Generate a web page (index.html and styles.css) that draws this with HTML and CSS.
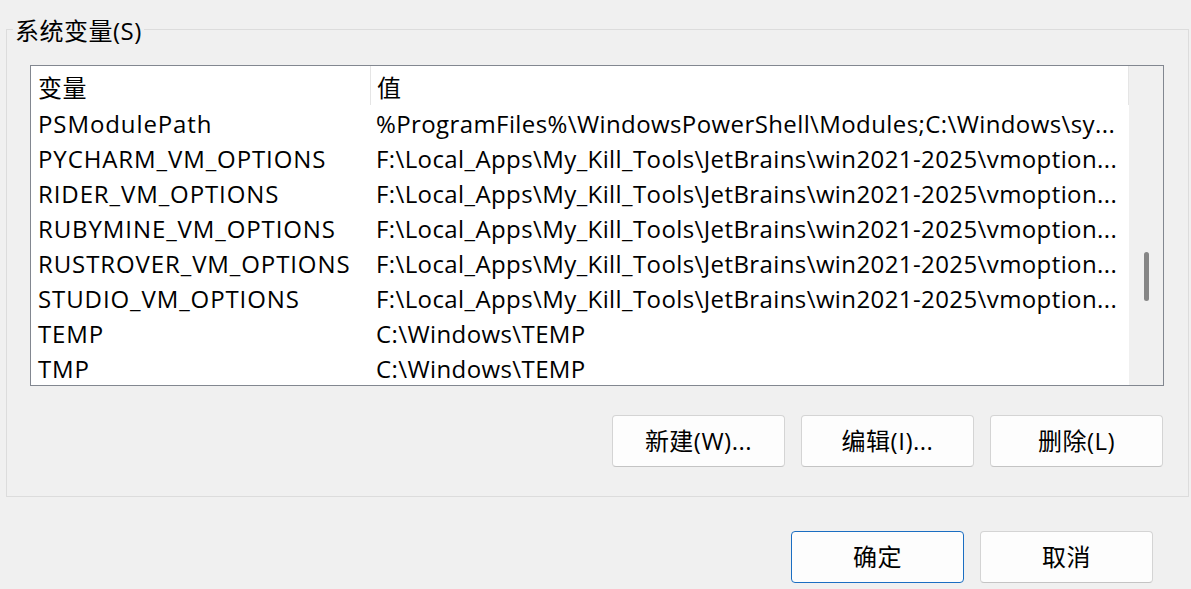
FILE: index.html
```html
<!DOCTYPE html>
<html lang="zh-CN">
<head>
<meta charset="utf-8">
<title>系统变量</title>
<link rel="stylesheet" href="styles.css">
</head>
<body>
<div class="dialog">
  <div class="group">
    <div class="group-title">系统变量(S)</div>
    <div class="listbox">
      <div class="list-main">
        <div class="list-header">
          <div class="hcell hcell-name">变量</div>
          <div class="hcell hcell-value">值</div>
        </div>
        <div class="row"><div class="cell cell-name">PSModulePath</div><div class="cell cell-value">%ProgramFiles%\WindowsPowerShell\Modules;C:\Windows\sy...</div></div>
        <div class="row"><div class="cell cell-name">PYCHARM_VM_OPTIONS</div><div class="cell cell-value">F:\Local_Apps\My_Kill_Tools\JetBrains\win2021-2025\vmoption...</div></div>
        <div class="row"><div class="cell cell-name">RIDER_VM_OPTIONS</div><div class="cell cell-value">F:\Local_Apps\My_Kill_Tools\JetBrains\win2021-2025\vmoption...</div></div>
        <div class="row"><div class="cell cell-name">RUBYMINE_VM_OPTIONS</div><div class="cell cell-value">F:\Local_Apps\My_Kill_Tools\JetBrains\win2021-2025\vmoption...</div></div>
        <div class="row"><div class="cell cell-name">RUSTROVER_VM_OPTIONS</div><div class="cell cell-value">F:\Local_Apps\My_Kill_Tools\JetBrains\win2021-2025\vmoption...</div></div>
        <div class="row"><div class="cell cell-name">STUDIO_VM_OPTIONS</div><div class="cell cell-value">F:\Local_Apps\My_Kill_Tools\JetBrains\win2021-2025\vmoption...</div></div>
        <div class="row"><div class="cell cell-name">TEMP</div><div class="cell cell-value">C:\Windows\TEMP</div></div>
        <div class="row"><div class="cell cell-name">TMP</div><div class="cell cell-value">C:\Windows\TEMP</div></div>
      </div>
      <div class="scrollbar"><div class="thumb"></div></div>
    </div>
    <div class="button-row">
      <button class="btn">新建(W)...</button>
      <button class="btn">编辑(I)...</button>
      <button class="btn">删除(L)</button>
    </div>
  </div>
  <div class="footer">
    <button class="btn btn-primary">确定</button>
    <button class="btn">取消</button>
  </div>
</div>
</body>
</html>
```
FILE: styles.css
```css
html, body {
  margin: 0;
  padding: 0;
  background: #f0f0f0;
}

body {
  width: 1191px;
  height: 589px;
  overflow: hidden;
  font-family: "Open Sans", "Noto Sans CJK SC", sans-serif;
  font-size: 24px;
  letter-spacing: 0.5px;
  color: #000;
}

.dialog {
  padding-top: 29px;
}

.group {
  margin: 0 2px 0 6px;
  border: 1px solid #dcdcdc;
  padding: 0 24px 29px 23px;
}

.group-title {
  width: fit-content;
  margin: -15px 0 0 -17px;
  padding: 0 2px;
  height: 31px;
  line-height: 31px;
  background: #f0f0f0;
  white-space: nowrap;
}

.listbox {
  margin-top: 19px;
  height: 321px;
  box-sizing: border-box;
  border: 1px solid #828790;
  background: #fff;
  display: flex;
  overflow: hidden;
}

.list-main {
  width: 1098px;
  flex: none;
}

.list-header,
.row {
  display: grid;
  grid-template-columns: 340px 1fr;
}

.list-header {
  height: 39px;
}

.hcell {
  box-sizing: border-box;
  height: 39px;
  padding: 4px 0 0 7px;
  line-height: 35px;
}

.hcell-name {
  border-right: 1px solid #e5e5e5;
}

.hcell-value {
  padding-left: 6px;
  border-right: 1px solid #e5e5e5;
}

.row {
  height: 35px;
}

.cell {
  box-sizing: border-box;
  height: 35px;
  padding: 2px 0 0 7px;
  line-height: 33px;
  white-space: nowrap;
  overflow: hidden;
}

.cell-name {
  letter-spacing: 0.9px;
}

.cell-value {
  padding-left: 5px;
  letter-spacing: 0.4px;
}

.scrollbar {
  flex: none;
  width: 34px;
  background: #f0f0f0;
  display: flex;
  flex-direction: column;
  align-items: center;
  padding-top: 186px;
  box-sizing: border-box;
}

.thumb {
  width: 5px;
  height: 49px;
  border-radius: 3px;
  background: #868686;
}

.button-row {
  margin: 29px 1px 0 0;
  display: flex;
  justify-content: flex-end;
  gap: 16px;
}

.btn {
  width: 173px;
  height: 52px;
  box-sizing: border-box;
  border: 1px solid #d4d4d4;
  border-bottom-color: #c4c4c4;
  border-radius: 4px;
  background: #fdfdfd;
  font: inherit;
  letter-spacing: inherit;
  color: #000;
  line-height: 50px;
  padding: 0;
  text-align: center;
}

.btn-primary {
  border-color: #1b6ec2;
}

.footer {
  margin: 34px 38px 0 0;
  display: flex;
  justify-content: flex-end;
  gap: 16px;
}
```
